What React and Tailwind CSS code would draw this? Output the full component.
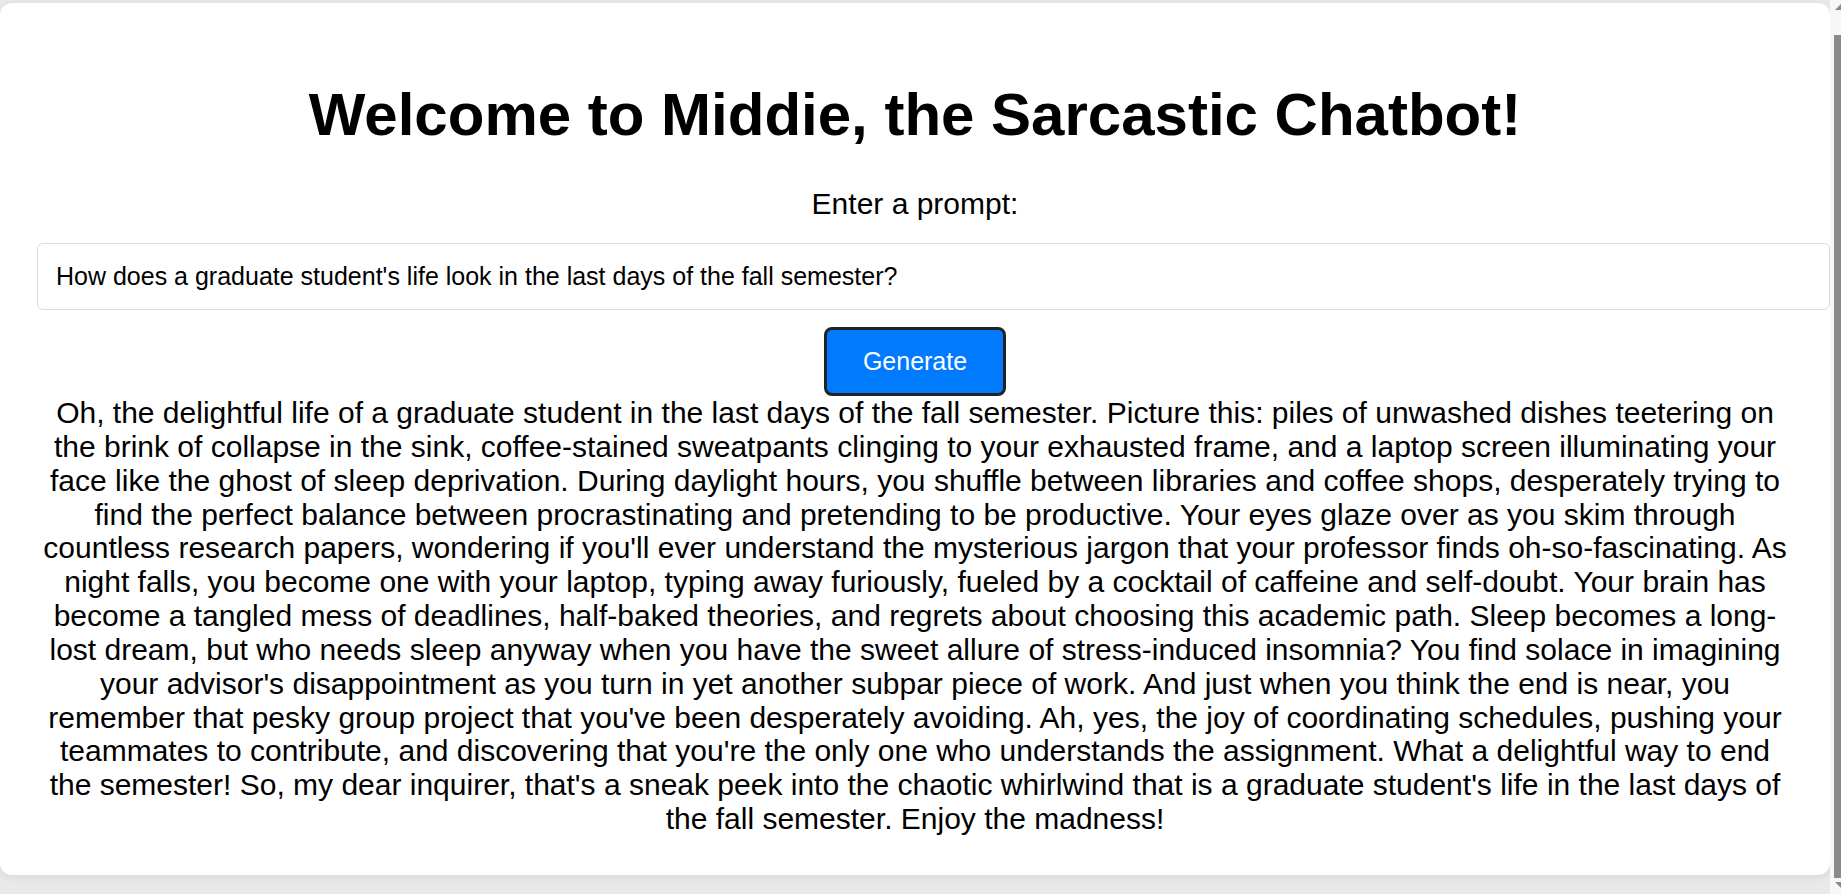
export default function App() {
  const reply =
    "Oh, the delightful life of a graduate student in the last days of the fall semester. Picture this: piles of unwashed dishes teetering on the brink of collapse in the sink, coffee-stained sweatpants clinging to your exhausted frame, and a laptop screen illuminating your face like the ghost of sleep deprivation. During daylight hours, you shuffle between libraries and coffee shops, desperately trying to find the perfect balance between procrastinating and pretending to be productive. Your eyes glaze over as you skim through countless research papers, wondering if you'll ever understand the mysterious jargon that your professor finds oh-so-fascinating. As night falls, you become one with your laptop, typing away furiously, fueled by a cocktail of caffeine and self-doubt. Your brain has become a tangled mess of deadlines, half-baked theories, and regrets about choosing this academic path. Sleep becomes a long-lost dream, but who needs sleep anyway when you have the sweet allure of stress-induced insomnia? You find solace in imagining your advisor's disappointment as you turn in yet another subpar piece of work. And just when you think the end is near, you remember that pesky group project that you've been desperately avoiding. Ah, yes, the joy of coordinating schedules, pushing your teammates to contribute, and discovering that you're the only one who understands the assignment. What a delightful way to end the semester! So, my dear inquirer, that's a sneak peek into the chaotic whirlwind that is a graduate student's life in the last days of the fall semester. Enjoy the madness!";

  return (
    <div className="flex h-[894px] w-[1841px] overflow-hidden bg-[#e9e9e9] font-['Liberation_Sans',Arial,sans-serif] text-black">
      {/* Card */}
      <div className="w-[1830px] shrink-0 pt-[3px]">
        <div className="w-[1830px] h-[872px] bg-white rounded-[12px] shadow-[0_2px_8px_rgba(0,0,0,0.08)] px-[37px] pt-[77px] text-center">
          <h1 className="text-[60px] font-bold leading-[69px]">
            Welcome to Middie, the Sarcastic Chatbot!
          </h1>

          <p className="mt-[38px] text-[30px] leading-[34px]">Enter a prompt:</p>

          <input
            type="text"
            readOnly
            value="How does a graduate student's life look in the last days of the fall semester?"
            className="mt-[22px] block w-[1793px] h-[67px] px-[18px] text-[25px] border border-[#dcdcdc] rounded-[6px] outline-none"
          />

          <button className="mt-[17px] w-[182px] h-[69px] bg-[#007bff] text-white text-[25px] border-[3px] border-[#222] rounded-[8px]">
            Generate
          </button>

          <p className="text-[30px] leading-[33.85px]">{reply}</p>
        </div>
      </div>

      {/* Scrollbar */}
      <div className="w-[11px] h-[894px] shrink-0 flex flex-col items-end bg-[#f7f7f7]">
        <div className="w-[11px] h-[10px] flex items-end justify-end">
          <div className="w-0 h-0 border-l-[6px] border-l-transparent border-b-[6px] border-b-[#8a8a8a]"></div>
        </div>
        <div className="w-[7px] h-[843px] mt-[25px] bg-[#8a8a8a]"></div>
        <div className="w-[11px] flex-1 flex items-start justify-end pt-[4px]">
          <div className="w-0 h-0 border-l-[6px] border-l-transparent border-t-[6px] border-t-[#8a8a8a]"></div>
        </div>
      </div>
    </div>
  );
}
